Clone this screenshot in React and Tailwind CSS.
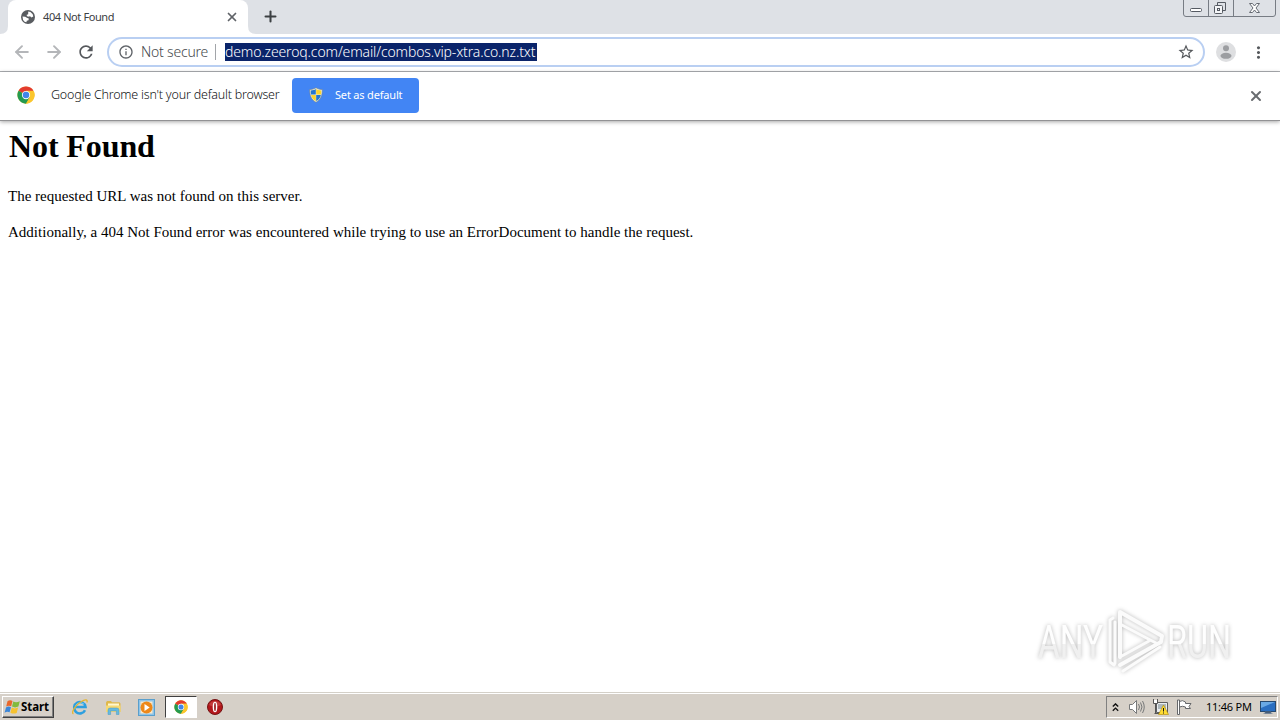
import { ArrowLeft, ArrowRight, Plus, X } from 'lucide-react';
import { MdInfoOutline, MdRefresh, MdStarBorder, MdMoreVert } from 'react-icons/md';

const ChromeLogo = ({ size = 18 }) => (
  <svg width={size} height={size} viewBox="0 0 48 48" className="shrink-0">
    <circle cx="24" cy="24" r="23" fill="#fbc62d" />
    <path d="M24 24 4.1 12.5A23 23 0 0 1 43.9 12.5H24z" fill="#e33b2e" />
    <path d="M4.1 12.5A23 23 0 0 0 24 47l10-17.3L24 24z" fill="#249a50" />
    <path d="M24 13h20.2A23 23 0 0 1 24 47l10-17.3z" fill="#fbc62d" />
    <circle cx="24" cy="24" r="11" fill="#fff" />
    <circle cx="24" cy="24" r="8.7" fill="#4285e8" />
  </svg>
);

const GlobeIcon = () => (
  <svg width="14" height="14" viewBox="0 0 14 14" className="shrink-0">
    <circle cx="7" cy="7" r="7" fill="#595c60" />
    <path d="M7.2 1.6 9.4 2l2.3 2.3.6 2.2-1.9 1-1.3-1.2-2.3.4L5.4 5.1l1.8-.9z" fill="#fff" />
    <path d="m1.5 6.4 2.7.3 2.1 1.2 1.5.7-.3 1.7-1.7.4-.4 1.6-1.8-.5-1.5-1.9z" fill="#fff" />
  </svg>
);

const ShieldIcon = () => (
  <svg width="14" height="16" viewBox="0 0 14 16" className="shrink-0">
    <path d="M7 .7c2 1.3 4 1.7 6.3 1.8C13.3 8.5 12 12.5 7 15.3 2 12.5.7 8.5.7 2.5 3 2.4 5 2 7 .7z" fill="#e9edda" stroke="#72808c" strokeWidth=".6" />
    <path d="M6.8 2v5.6H2C1.8 6 1.7 4.7 1.8 3.5 4 3.4 5.5 3 6.8 2z" fill="#2476cf" />
    <path d="M7.2 2c1.3 1 2.8 1.4 5 1.5.1 1.2 0 2.5-.2 4.1H7.2z" fill="#fbd32c" />
    <path d="M2.1 8h4.7v6.1C4.2 12.6 2.7 10.8 2.1 8z" fill="#fbd32c" />
    <path d="M7.2 8h4.7c-.6 2.8-2.1 4.6-4.7 6.1z" fill="#2476cf" />
  </svg>
);

const WindowButtons = () => (
  <svg width="94" height="18" viewBox="0 0 94 18" fill="none" stroke="#777c84">
    <path d="M.5 0v14q0 2.5 2.5 2.5h87q2.5 0 2.5-2.5V0M25.500 0v16M50.500 0v16" />
    <rect x="7.500" y="8.500" width="11" height="3" rx="1" fill="#fff" stroke="#555a62" />
    <path d="M34.500 5V2.500h8v8H40" stroke="#555a62" />
    <rect x="31.500" y="5.500" width="8" height="8" rx="1" fill="#f4f5f7" stroke="#555a62" />
    <rect x="34.500" y="8.500" width="2" height="2" stroke="#555a62" />
    <path d="M66.500 3.500h3l2 2.500 2-2.500h3L73 8l3.500 4.500h-3l-2-2.500-2 2.500h-3L70 8z" fill="#fff" stroke="#666b73" />
  </svg>
);

const TabStrip = () => (
  <header className="flex h-[34px] items-start justify-between bg-[#dee1e6]">
    <div className="flex h-full items-end">
      <svg width="8" height="8" viewBox="0 0 8 8">
        <path d="M0 8h8V0Q8 8 0 8z" fill="#fff" />
      </svg>
      <div className="flex h-full w-60 items-center rounded-t-lg bg-white pr-[9px] pl-[13px]">
        <GlobeIcon />
        <span className="ml-2 grow text-[11px] tracking-[-0.4px] whitespace-nowrap text-[#3c4043]">404 Not Found</span>
        <X size={14} strokeWidth={3} color="#5f6368" />
      </div>
      <svg width="8" height="8" viewBox="0 0 8 8">
        <path d="M8 8H0V0Q0 8 8 8z" fill="#fff" />
      </svg>
      <div className="flex h-full w-7 items-center justify-center">
        <Plus size={17} strokeWidth={2.9} color="#3c4043" />
      </div>
    </div>
    <div className="mr-[3px]">
      <WindowButtons />
    </div>
  </header>
);

const Toolbar = () => (
  <div className="flex h-[38px] items-center border-b border-[#aeb0b4] bg-white">
    <div className="flex w-[107px] items-center gap-[12px] pl-[12px]">
      <ArrowLeft size={20} strokeWidth={2.3} color="#b4b6b9" />
      <ArrowRight size={20} strokeWidth={2.3} color="#b4b6b9" />
      <MdRefresh size={20} color="#55585c" />
    </div>
    <div className="flex h-[30px] w-[1098px] items-center rounded-full border-2 border-[#b9cff2] bg-white pr-2 pl-[9px]">
      <MdInfoOutline size={16} color="#5f6368" />
      <span className="ml-[7px] w-[68px] pb-px text-[14px] font-light tracking-[-0.2px] whitespace-nowrap text-[#45484c]">Not secure</span>
      <span className="ml-[6px] h-4 w-px bg-[#a2a5a9]" />
      <span className="ml-[9px] flex h-[18px] w-[312px] items-center bg-[#0a246a] pb-[2px] text-[14px] font-light tracking-[-0.14px] whitespace-nowrap text-white">
        demo.zeeroq.com/email/combos.vip-xtra.co.nz.txt
      </span>
      <MdStarBorder size={18} color="#55585c" className="ml-auto" />
    </div>
    <svg width="20" height="20" viewBox="0 0 20 20" className="ml-[11px]">
      <circle cx="10" cy="10" r="10" fill="#dedfe1" />
      <circle cx="10" cy="6.300" r="3" fill="#9c9ea1" />
      <ellipse cx="10" cy="13.800" rx="5.500" ry="3" fill="#9c9ea1" />
    </svg>
    <MdMoreVert size={19} color="#55585c" className="ml-[13px]" />
  </div>
);

const InfoBar = () => (
  <div className="relative flex h-[49px] items-center border-b border-[#929294] bg-white pr-4 pb-px pl-[17px] shadow-[0_1px_4px_rgba(0,0,0,0.35)]">
    <ChromeLogo />
    <span className="ml-4 w-[241px] text-[12.500px] font-light tracking-[-0.21px] whitespace-nowrap text-[#111315]">
      Google Chrome isn't your default browser
    </span>
    <button type="button" className="flex h-[35px] w-[127px] items-center rounded-[4px] bg-[#4285f4] pl-[17px] text-[11px] whitespace-nowrap text-white">
      <ShieldIcon />
      <span className="ml-[12px] tracking-[-0.18px]">Set as default</span>
    </button>
    <X size={16} strokeWidth={3} color="#696c70" className="mt-px ml-auto" />
  </div>
);

const Watermark = () => (
  <svg width="206" height="72" viewBox="0 0 206 72" className="absolute top-[483px] left-[1032px] drop-shadow-[0_0_2px_rgba(0,0,0,0.28)]">
    <defs>
      <linearGradient id="wordmark" gradientUnits="userSpaceOnUse" x1="0" y1="-34" x2="0" y2="0">
        <stop offset=".6" stopColor="#fefefe" />
        <stop offset=".6" stopColor="#f0f0f0" />
      </linearGradient>
    </defs>
    <g fontFamily="Roboto, sans-serif" fontSize="47" fontWeight="400" fill="url(#wordmark)">
      <text transform="translate(6 54) scale(.71 1)">ANY</text>
      <text transform="translate(135 54) scale(.69 1)">RUN</text>
    </g>
    <g fill="none" stroke="#fbfbfb" strokeWidth="4" strokeLinejoin="round" strokeLinecap="round">
      <path d="M88 53V8l42 24-1 6-41 23" />
      <path d="m88 20 36 19M81 14l-3 2v42l4 3 1-2V18M91 67l37-24M88 53l29-16" strokeWidth="3" />
    </g>
  </svg>
);

const ErrorPage = () => (
  <main className="relative h-[572px] bg-white px-2 pt-[7px] font-['Liberation_Serif',serif] text-[15px] leading-[18px] text-black">
    <h1 className="ml-px text-[32px] leading-[37px] font-bold tracking-[-0.1px]">Not Found</h1>
    <p className="mt-[22px] w-max tracking-[0.01px]">The requested URL was not found on this server.</p>
    <p className="mt-[18px] w-max tracking-[0.01px]">
      Additionally, a 404 Not Found error was encountered while trying to use an ErrorDocument to handle the request.
    </p>
    <Watermark />
  </main>
);

const WindowsFlag = () => (
  <svg width="17" height="16" viewBox="0 0 17 16">
    <path d="M3.500 2.200Q6 .6 8.500 2L7.200 7.200Q4.700 6 2.200 7.500z" fill="#e9672b" />
    <path d="M9.300 2.400Q12 4 15.800 2.200L14.400 7.600Q11 9.200 8 7.600z" fill="#82ba3c" />
    <path d="M2 8.400Q4.500 6.900 7 8.200L5.600 13.300Q3 12 .6 13.700z" fill="#3b86d8" />
    <path d="M7.800 8.600Q10.600 10.200 14.100 8.600L12.700 13.900Q9.500 15.400 6.400 13.700z" fill="#f6c22f" />
  </svg>
);

const IeIcon = () => (
  <svg width="18" height="18" viewBox="0 0 18 18" fill="none">
    <path d="M14 12.200A5.700 5.700 0 1 1 14.500 9H4" stroke="#2d9fdf" strokeWidth="2.600" />
    <path d="M4.400 8.200A5.300 5.300 0 0 1 13 6.200" stroke="#79d0f5" strokeWidth="1" />
    <path d="M2.400 15.800C-.5 14.500 5 6.500 10 3.700c4-2.400 7.300-2.500 5.800.9" stroke="#e6b52d" strokeWidth="1.300" />
  </svg>
);

const FolderIcon = () => (
  <svg width="17" height="17" viewBox="0 0 17 17">
    <path d="M1 3.500 2 2h4l1 1.200h7.500l1 1.300V13H1z" fill="#dfb84c" />
    <path d="M3 4.500h11v6H3z" fill="#fff7cf" />
    <path d="M1 6.500h14.500V13H1z" fill="#f5d974" />
    <path d="M3 15.500v-4.300Q3 9 5.300 9h6.500Q14 9 14 11.200v4.300h-2.600v-3.600H5.600v3.600z" fill="#65b9df" stroke="#4798c2" strokeWidth=".5" />
  </svg>
);

const PlayerIcon = () => (
  <svg width="17" height="17" viewBox="0 0 17 17">
    <rect x=".5" y=".5" width="16" height="16" fill="#8fc4e8" stroke="#5a9fcc" />
    <rect x="2.500" y="2.500" width="12" height="12" fill="#fbe9c9" />
    <circle cx="8.500" cy="8.500" r="6" fill="#ed8819" />
    <path d="m6.500 5 5.200 3.500L6.500 12z" fill="#fff" />
  </svg>
);

const OperaIcon = () => (
  <svg width="16" height="16" viewBox="0 0 16 16">
    <circle cx="8" cy="8" r="7.500" fill="#b3171b" stroke="#741414" />
    <path d="M2 6a6.500 6.500 0 0 1 12 0Q8 9 2 6z" fill="#cf5551" opacity=".6" />
    <ellipse cx="8" cy="8" rx="2.300" ry="5.300" fill="#fff" />
    <ellipse cx="8" cy="8" rx=".9" ry="4.300" fill="#982022" />
  </svg>
);

const SpeakerIcon = () => (
  <svg width="17" height="16" viewBox="0 0 17 16" fill="none" stroke="#77797a">
    <path d="M1.500 5.500h3l4-4v13l-4-4h-3z" fill="#fff" />
    <path d="M10.500 5q2 3 0 6M12.500 3.500q3 4.500 0 9M14.500 2q3.500 6 0 12" />
  </svg>
);

const NetworkIcon = () => (
  <svg width="17" height="16" viewBox="0 0 17 16" fill="none">
    <path d="M4.500 3.500h11v10h-11z" fill="#e9edf0" stroke="#5d5e60" />
    <path d="M6 5h8v5H6z" fill="#aeb8bd" />
    <path d="M1.500 1v3.500h4V1z" fill="#fff" />
    <path d="M1.500 0v4.500h4V0M3.500 5v9M2.500 14.500h5" stroke="#555" />
    <path d="m11.500 6 5 9.500h-10z" fill="#ffdc31" stroke="#b18a00" strokeWidth=".6" />
    <path d="M11.500 9v3.500M11.500 13.500v1" stroke="#161616" />
  </svg>
);

const FlagIcon = () => (
  <svg width="17" height="16" viewBox="0 0 17 16" fill="#fff" stroke="#65676a">
    <path d="M1.500 1v14.500h2V1zM3.500 2.500q3-2 6 .5v1.500h5.500l-2 3 1.500 2H9.500V8q-3-1.500-6 0z" />
  </svg>
);

const MonitorIcon = () => (
  <svg width="16" height="15" viewBox="0 0 16 15">
    <rect x=".5" y="1.500" width="15" height="10" fill="#2b6fc1" stroke="#27496f" />
    <path d="M1 2h14L1 8z" fill="#6aa9e5" />
    <path d="M5 12h6v1.500H5zM3.500 13.500h9" fill="#344b67" stroke="#718296" strokeWidth=".7" />
  </svg>
);

const Taskbar = () => (
  <footer className="flex h-7 items-center justify-between border-t border-[#d4d0c8] bg-[#d6d0c8] pt-px shadow-[inset_0_1px_0_#fff]">
    <div className="flex items-center">
      <button type="button" className="ml-[2px] flex h-[22px] w-[52px] items-center border border-t-white border-r-[#404040] border-b-[#404040] border-l-white pl-px text-[11.500px] font-bold tracking-[-0.1px] text-black shadow-[inset_-1px_-1px_0_#808080]">
        <WindowsFlag />
        Start
      </button>
      <div className="ml-[17px] flex items-center">
        <IeIcon />
        <div className="ml-4"><FolderIcon /></div>
        <div className="ml-4"><PlayerIcon /></div>
        <div className="ml-[10px] flex h-[22px] w-8 items-center justify-center border border-t-[#404040] border-r-white border-b-white border-l-[#404040] bg-white">
          <ChromeLogo size={14} />
        </div>
        <div className="ml-[10px]"><OperaIcon /></div>
      </div>
    </div>
    <div className="mr-[2px] flex h-[22px] w-[172px] items-center border border-t-[#808080] border-r-white border-b-white border-l-[#808080] pl-[5px]">
      <svg width="7" height="9" viewBox="0 0 7 9" fill="none" stroke="#111" strokeWidth="1.400">
        <path d="m.8 3.500 2.700-2.600 2.700 2.600M.8 7.700l2.700-2.600 2.700 2.600" />
      </svg>
      <div className="ml-[9px] flex gap-[7px]">
        <SpeakerIcon />
        <NetworkIcon />
        <FlagIcon />
      </div>
      <span className="ml-[13px] w-[46px] text-[11px] tracking-[-0.25px] whitespace-nowrap text-black">11:46 PM</span>
      <div className="ml-[8px]"><MonitorIcon /></div>
    </div>
  </footer>
);

export default function App() {
  return (
    <div className="flex h-[720px] w-[1280px] flex-col overflow-hidden bg-white font-['Noto_Sans','Liberation_Sans',sans-serif]">
      <TabStrip />
      <Toolbar />
      <div className="relative z-10"><InfoBar /></div>
      <ErrorPage />
      <Taskbar />
    </div>
  );
}
